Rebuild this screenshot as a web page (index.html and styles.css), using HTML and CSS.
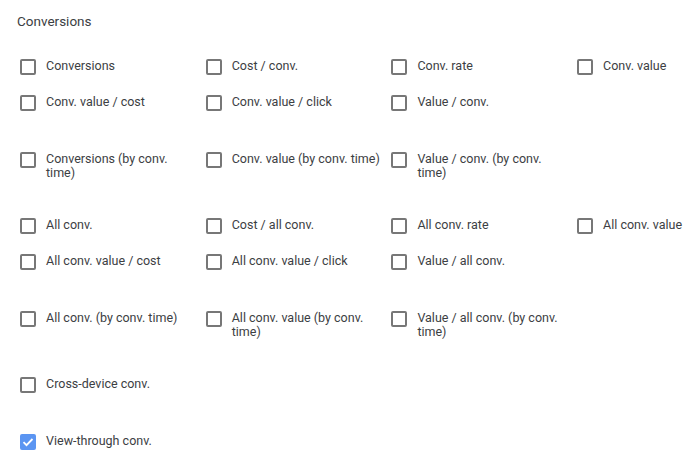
FILE: index.html
```html
<!DOCTYPE html>
<html lang="en">
<head>
  <meta charset="UTF-8" />
  <meta name="viewport" content="width=device-width, initial-scale=1.0" />
  <title>Conversions columns</title>
  <link rel="stylesheet" href="styles.css">
</head>
<body>
  <div class="panel">
    <div class="title">Conversions</div>

    <div class="group">
      <div class="item"><span class="box"></span><span class="label">Conversions</span></div>
      <div class="item"><span class="box"></span><span class="label">Cost / conv.</span></div>
      <div class="item"><span class="box"></span><span class="label">Conv. rate</span></div>
      <div class="item"><span class="box"></span><span class="label">Conv. value</span></div>
      <div class="item"><span class="box"></span><span class="label">Conv. value / cost</span></div>
      <div class="item"><span class="box"></span><span class="label">Conv. value / click</span></div>
      <div class="item"><span class="box"></span><span class="label">Value / conv.</span></div>
    </div>

    <div class="group">
      <div class="item"><span class="box"></span><span class="label">Conversions (by conv. time)</span></div>
      <div class="item"><span class="box"></span><span class="label">Conv. value (by conv. time)</span></div>
      <div class="item"><span class="box"></span><span class="label">Value / conv. (by conv. time)</span></div>
    </div>

    <div class="group">
      <div class="item"><span class="box"></span><span class="label">All conv.</span></div>
      <div class="item"><span class="box"></span><span class="label">Cost / all conv.</span></div>
      <div class="item"><span class="box"></span><span class="label">All conv. rate</span></div>
      <div class="item"><span class="box"></span><span class="label">All conv. value</span></div>
      <div class="item"><span class="box"></span><span class="label">All conv. value / cost</span></div>
      <div class="item"><span class="box"></span><span class="label">All conv. value / click</span></div>
      <div class="item"><span class="box"></span><span class="label">Value / all conv.</span></div>
    </div>

    <div class="group">
      <div class="item"><span class="box"></span><span class="label">All conv. (by conv. time)</span></div>
      <div class="item"><span class="box"></span><span class="label">All conv. value (by conv. time)</span></div>
      <div class="item"><span class="box"></span><span class="label">Value / all conv. (by conv. time)</span></div>
    </div>

    <div class="group">
      <div class="item"><span class="box"></span><span class="label">Cross-device conv.</span></div>
    </div>

    <div class="group">
      <div class="item">
        <span class="box checked">
          <svg viewBox="0 0 16 16" width="16" height="16"><path d="M3.5 8.2l3 3 6-6.2" fill="none" stroke="#fff" stroke-width="1.8"/></svg>
        </span>
        <span class="label">View-through conv.</span>
      </div>
    </div>
  </div>
</body>
</html>
```

FILE: styles.css
```css
body {
  margin: 0;
  font-family: Roboto, "Liberation Sans", Arial, sans-serif;
  color: #3c4043;
  background: #fff;
  overflow: hidden;
}
.panel {
  padding: 13px 0 0 17px;
}
.title {
  font-size: 13.5px;
  line-height: 16px;
  margin-bottom: 30px;
}
.group {
  display: grid;
  grid-template-columns: repeat(3, 185.7px) auto;
  margin-left: 3px;
  margin-bottom: 21px;
}
.item {
  display: flex;
  align-items: flex-start;
  gap: 10px;
  padding-bottom: 20px;
}
.box {
  flex: none;
  width: 16px;
  height: 16px;
  box-sizing: border-box;
  border: 2px solid #777;
  border-radius: 2px;
  position: relative;
}
.box.checked {
  background: #5b95f2;
  border-color: #5b95f2;
}
.box svg {
  position: absolute;
  left: -2px;
  top: -2px;
}
.label {
  font-size: 12.5px;
  line-height: 14px;
  margin-top: 0;
  margin-bottom: -3px;
  max-width: 151px;
}
```
